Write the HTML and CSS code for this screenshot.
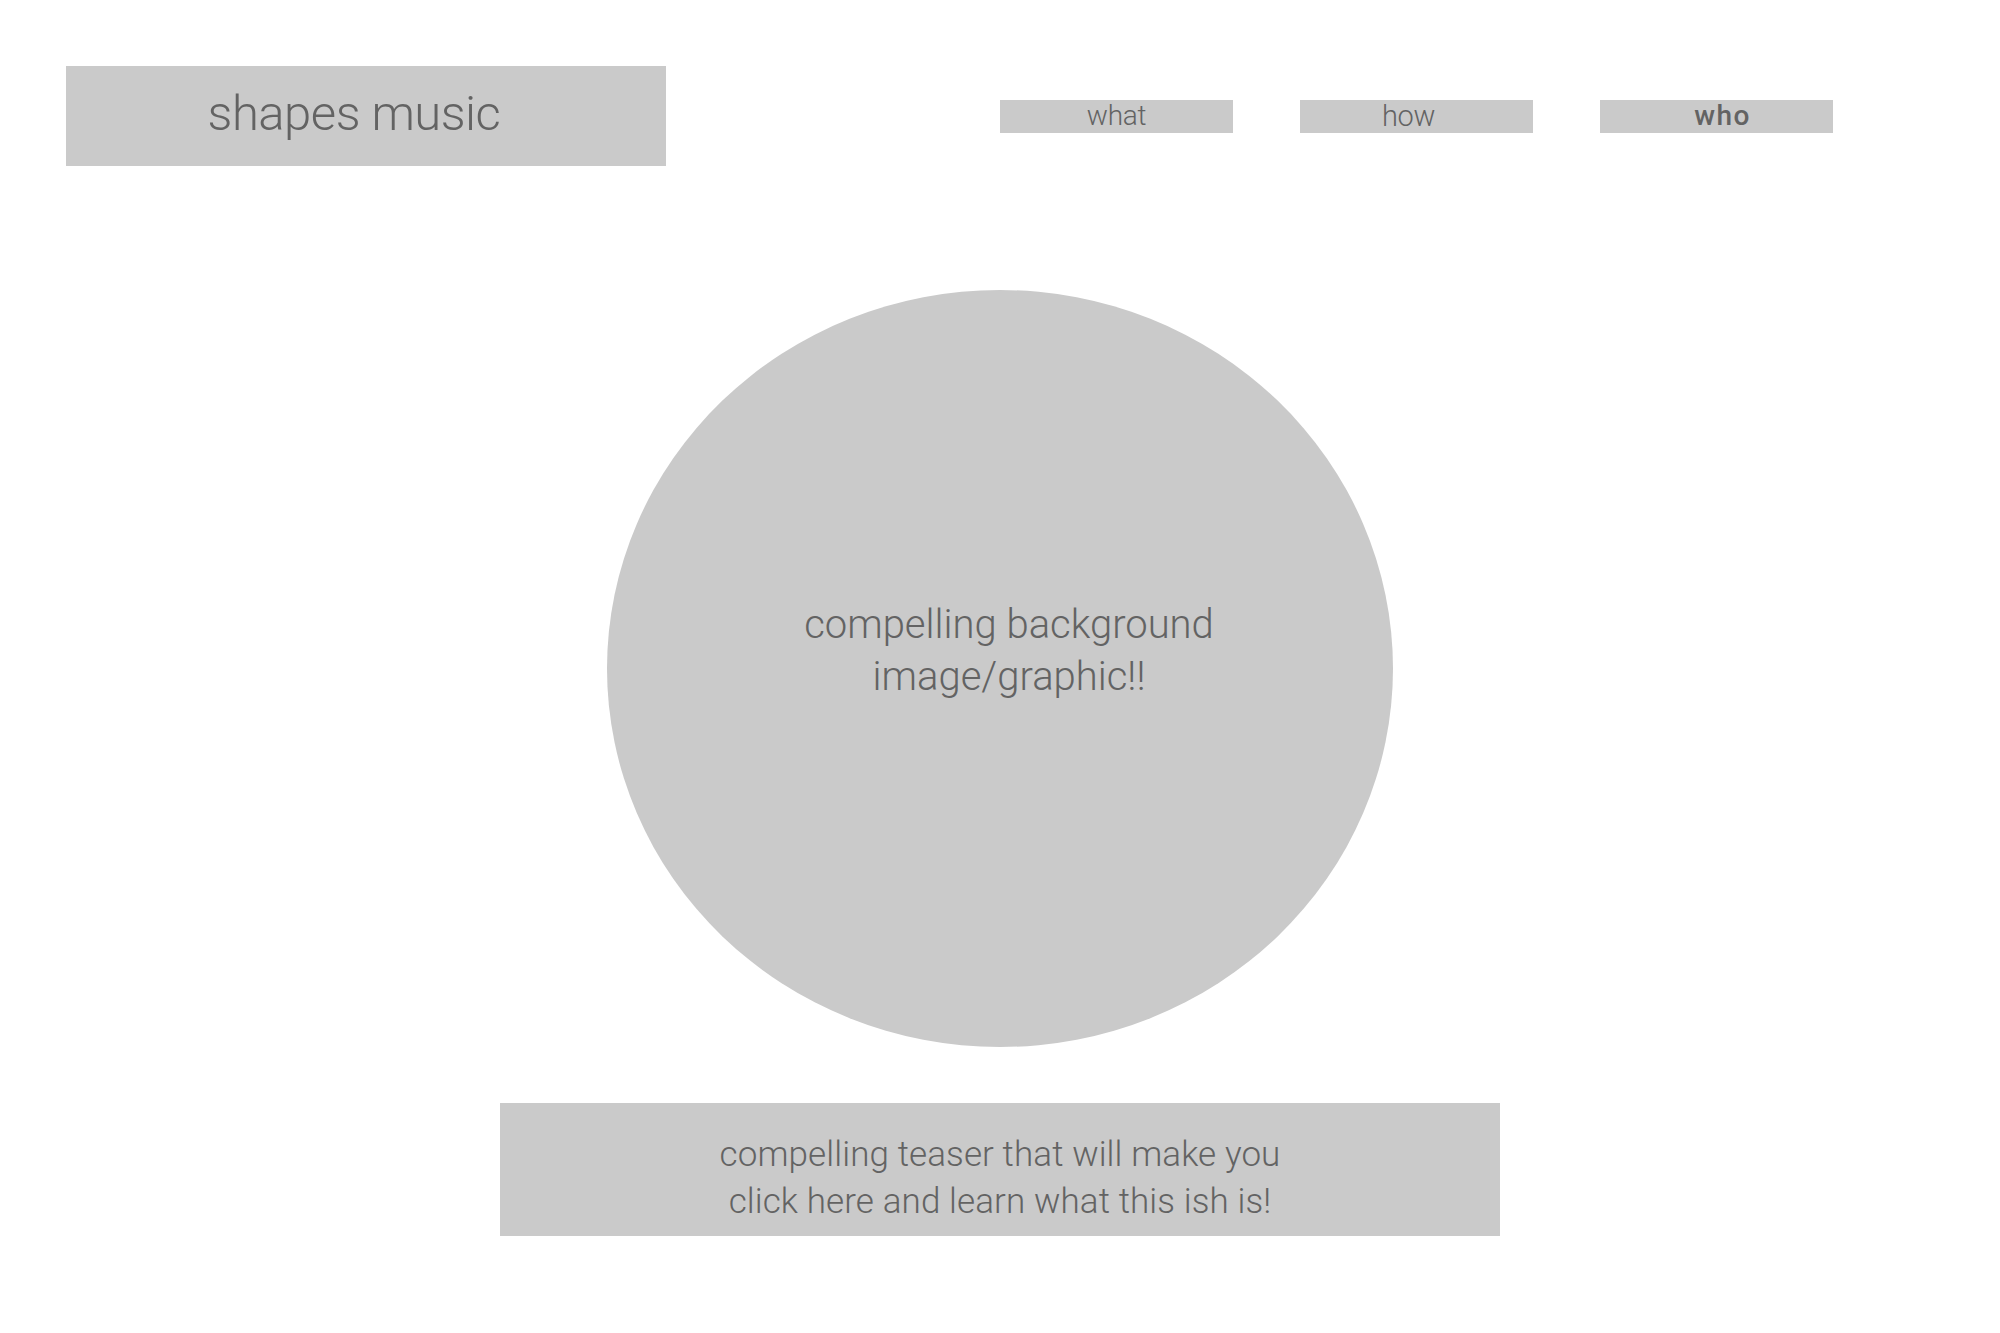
FILE: index.html
```html
<!DOCTYPE html>
<html lang="en">
<head>
<meta charset="utf-8">
<title>shapes music</title>
<link rel="stylesheet" href="styles.css">
</head>
<body>
<header class="header">
  <div class="logo">shapes music</div>
  <nav class="nav">
    <a class="nav-item">what</a>
    <a class="nav-item nav-item-how">how</a>
    <a class="nav-item nav-item-active">who</a>
  </nav>
</header>
<main class="main">
  <div class="hero">
    <p class="hero-text">compelling background<br>image/graphic!!</p>
  </div>
  <div class="teaser">
    <p class="teaser-text">compelling teaser that will make you<br>click here and learn what this ish is!</p>
  </div>
</main>
</body>
</html>
```

FILE: styles.css
```css
html, body {
  margin: 0;
  padding: 0;
  background: #ffffff;
}

body {
  font-family: Roboto, "Liberation Sans", sans-serif;
  font-weight: 300;
  color: #636363;
}

.header {
  display: flex;
  align-items: center;
  padding: 66px 0 0 66px;
}

.logo {
  width: 600px;
  height: 100px;
  background: #cacaca;
  display: flex;
  align-items: center;
  justify-content: center;
  box-sizing: border-box;
  padding: 0 24px 6px 0;
  font-size: 49px;
  letter-spacing: -0.5px;
}

.nav {
  display: flex;
  gap: 67px;
  margin-left: 334px;
}

.nav-item {
  width: 233px;
  height: 33px;
  background: #cacaca;
  display: flex;
  align-items: center;
  justify-content: center;
  box-sizing: border-box;
  font-size: 28px;
  line-height: 1;
  letter-spacing: -0.3px;
}

.nav-item-how {
  padding-right: 16px;
  font-size: 29px;
}

.nav-item-active {
  font-weight: 500;
  font-size: 28px;
  letter-spacing: 1.5px;
  padding-left: 12px;
}

.main {
  display: flex;
  flex-direction: column;
  align-items: center;
  margin-top: 124px;
}

.hero {
  width: 786px;
  height: 757px;
  border-radius: 50%;
  background: #cacaca;
  display: flex;
  align-items: center;
  justify-content: center;
  box-sizing: border-box;
  padding: 0 0 36px 18px;
}

.hero-text {
  margin: 0;
  text-align: center;
  font-size: 40px;
  line-height: 52px;
}

.teaser {
  width: 1000px;
  height: 133px;
  margin-top: 56px;
  background: #cacaca;
  display: flex;
  align-items: center;
  justify-content: center;
  box-sizing: border-box;
  padding-top: 16px;
}

.teaser-text {
  margin: 0;
  text-align: center;
  font-size: 35px;
  line-height: 47px;
  letter-spacing: 0.1px;
}
```
